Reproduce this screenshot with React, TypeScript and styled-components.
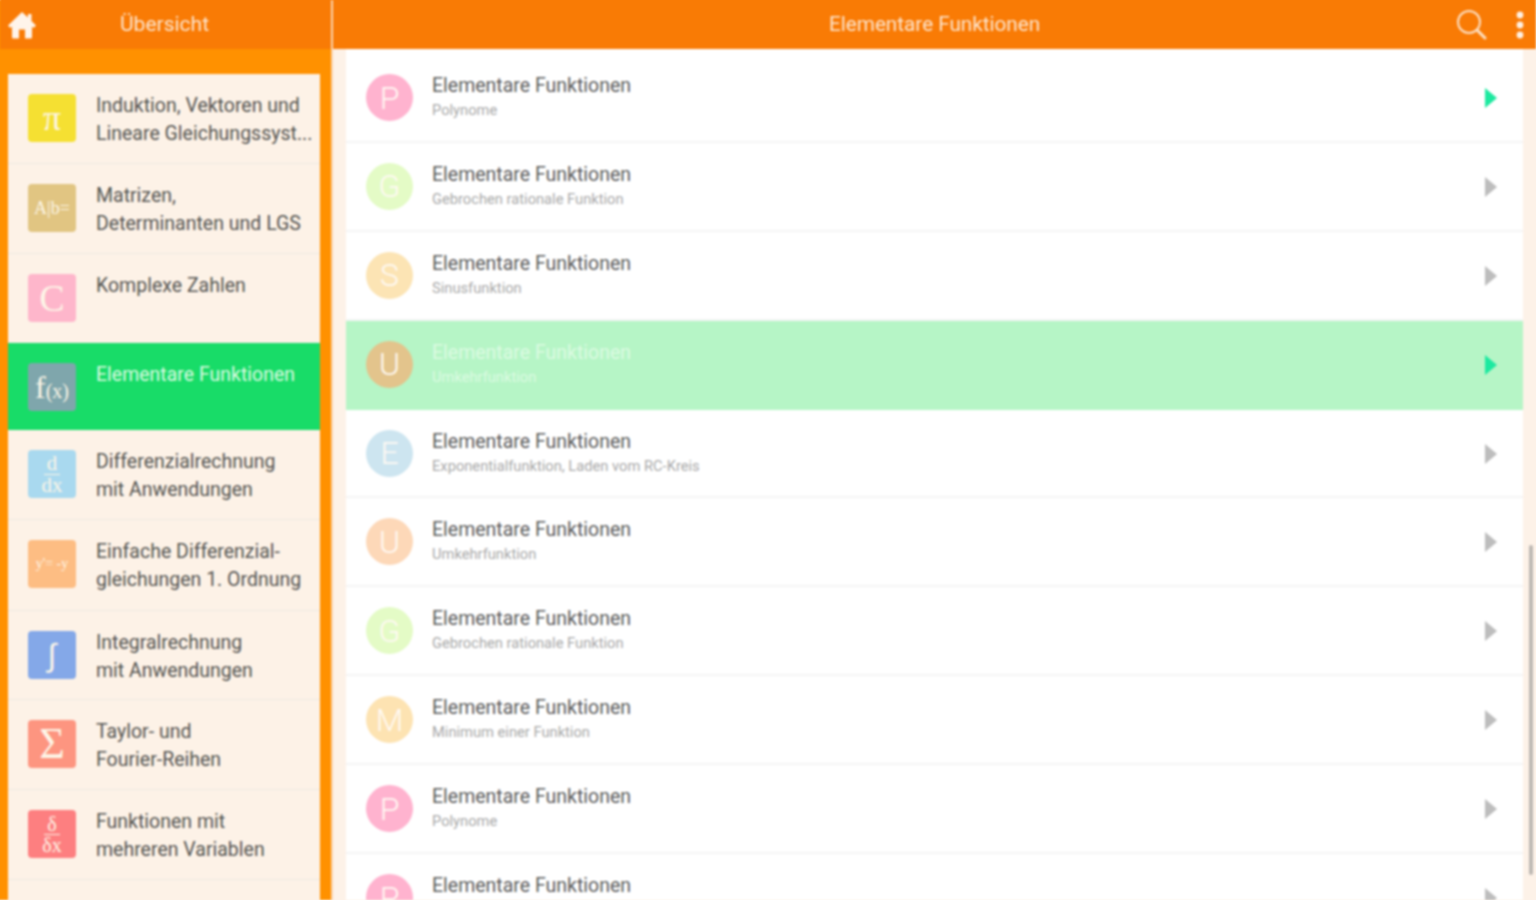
import styled, { createGlobalStyle } from "styled-components";

const GlobalStyle = createGlobalStyle`
  html, body {
    margin: 0;
    padding: 0;
    overflow: hidden;
    background: #fdf2e8;
  }
`;

const Page = styled.div`
  display: grid;
  grid-template-columns: 331px 2px 1fr;
  grid-template-rows: 49px 1fr;
  width: 1536px;
  height: 900px;
  overflow: hidden;
  position: relative;
  font-family: Roboto, "Noto Sans", sans-serif;
  filter: blur(0.8px);
  box-shadow: 0 -4px 0 #f97b05, -4px 0 0 #ff9100, 4px 0 0 #fdf2e8, 0 4px 0 #fdf2e8;
`;

const SideBar = styled.header`
  display: flex;
  align-items: center;
  background: #f97b05;
  color: #fde6d0;
`;

const HomeButton = styled.div`
  display: flex;
  width: 44px;
  padding-left: 8px;
  box-sizing: border-box;
`;

const SideTitle = styled.h2`
  margin: 0 0 2px 76px;
  font-size: 21px;
  font-weight: 400;
  line-height: 46px;
`;

const Divider = styled.div`
  grid-row: 1 / 3;
  grid-column: 2;
  background: #fbd3ac;
`;

const MainBar = styled.header`
  display: flex;
  align-items: center;
  background: #f97b05;
  color: #fde6d0;
  padding-left: 496px;
`;

const MainTitle = styled.h1`
  margin: 0 0 2px;
  width: 627px;
  font-size: 20.7px;
  font-weight: 400;
  line-height: 46px;
`;

const IconSlot = styled.div<{ $width: number }>`
  display: flex;
  width: ${(p) => p.$width}px;
`;

const Sidebar = styled.nav`
  background: #ff9100;
  padding: 25px 11px 0 8px;
  overflow: hidden;
`;

const TopicList = styled.div`
  background: #fdf2e7;
  height: 100%;
`;

const Topic = styled.div<{ $active?: boolean; $height: number }>`
  display: flex;
  box-sizing: border-box;
  height: ${(p) => p.$height}px;
  padding: 18px 0 0 20px;
  gap: 20px;
  background: ${(p) => (p.$active ? "#18dc68" : "transparent")};
  border-bottom: 1px solid ${(p) => (p.$active ? "#18dc68" : "#eee9e2")};
`;

const Tile = styled.div<{ $color: string }>`
  flex: none;
  display: flex;
  align-items: center;
  justify-content: center;
  width: 48px;
  height: 48px;
  margin-top: 2px;
  border-radius: 4px;
  background: ${(p) => p.$color};
  color: #fdf6e8;
  font-family: "Liberation Serif", serif;
  line-height: 1;
`;

const Glyph = styled.span<{ $size: number; $sans?: boolean }>`
  font-family: ${(p) => (p.$sans ? '"Liberation Sans", sans-serif' : "inherit")};
  font-size: ${(p) => p.$size}px;
  line-height: 1;
  white-space: nowrap;
`;

const Fraction = styled.span<{ $size: number }>`
  display: flex;
  flex-direction: column;
  align-items: center;
  font-size: ${(p) => p.$size}px;
  line-height: 1;

  span:first-child {
    border-bottom: 1px solid #fdf6e8;
    padding: 0 3px;
  }
`;

const TopicText = styled.div<{ $active?: boolean }>`
  width: 216px;
  font-size: 19.5px;
  line-height: 28px;
  color: ${(p) => (p.$active ? "#dcfbe2" : "#555552")};
`;

const TopicLine = styled.div`
  white-space: nowrap;
`;

const Content = styled.main`
  background: #fdf2e8;
  padding-left: 13px;
  padding-right: 13px;
  overflow: hidden;
`;

const EntryList = styled.div`
  background: #fff;
  padding-top: 5px;
`;

const Entry = styled.div<{ $selected?: boolean }>`
  display: flex;
  align-items: flex-start;
  box-sizing: border-box;
  height: 88.9px;
  padding: 20px 26px 0 20px;
  background: ${(p) => (p.$selected ? "#b6f5c6" : "#fff")};
  border-bottom: 2px solid ${(p) => (p.$selected ? "#b6f5c6" : "#f4f4f4")};
`;

const Badge = styled.div<{ $color: string }>`
  flex: none;
  display: flex;
  align-items: center;
  justify-content: center;
  width: 47px;
  height: 47px;
  border-radius: 50%;
  background: ${(p) => p.$color};
  color: #fffaf4;
  font-size: 32px;
  font-weight: 300;
`;

const EntryText = styled.div`
  flex: 1;
  margin: -1px 0 0 19px;
`;

const EntryTitle = styled.div<{ $selected?: boolean }>`
  font-size: 19.5px;
  line-height: 26px;
  color: ${(p) => (p.$selected ? "#dcfbe2" : "#5c5c5c")};
`;

const EntrySub = styled.div<{ $selected?: boolean }>`
  font-size: 14.7px;
  line-height: 22px;
  color: ${(p) => (p.$selected ? "#dcfbe2" : "#a8a8a8")};
`;

const Arrow = styled.div<{ $on?: boolean }>`
  flex: none;
  width: 0;
  height: 0;
  margin-top: 14px;
  border-style: solid;
  border-width: 10px 0 10px 12px;
  border-color: transparent transparent transparent
    ${(p) => (p.$on ? "#1de9a0" : "#bdbdbd")};
`;

const ScrollThumb = styled.div`
  position: absolute;
  left: 1529px;
  top: 545px;
  width: 4px;
  height: 330px;
  border-radius: 2px;
  background: #bdb8b3;
`;

const HomeIcon = () => (
  <svg width="28" height="28" viewBox="0 0 28 28" fill="#fff4ea">
    <path d="M14 1 L0 14.5 L2.4 17 L4 15.5 V26 C4 27 4.6 27.5 5.5 27.5 H11 V18.5 H17 V27.5 H22.5 C23.4 27.5 24 27 24 26 V15.5 L25.6 17 L28 14.5 L23.5 10 V3 H20 V6.6 Z" />
  </svg>
);

const SearchIcon = () => (
  <svg width="32" height="32" viewBox="0 0 32 32" fill="none" stroke="#fde0c4">
    <circle cx="13" cy="13" r="11" strokeWidth="2" />
    <path d="M21 21 L29 29" strokeWidth="3" strokeLinecap="round" />
  </svg>
);

const DotsIcon = () => (
  <svg width="10" height="30" viewBox="0 0 10 30" fill="#fff0e2">
    <circle cx="5" cy="5" r="3.4" />
    <circle cx="5" cy="15" r="3.4" />
    <circle cx="5" cy="25" r="3.4" />
  </svg>
);

const topics = [
  { height: 90, color: "#f5e032", glyph: <Glyph $size={36}>π</Glyph>, lines: ["Induktion, Vektoren und", "Lineare Gleichungssyst..."] },
  { height: 90, color: "#e1c582", glyph: <Glyph $size={18}>A|b=</Glyph>, lines: ["Matrizen,", "Determinanten und LGS"] },
  { height: 89, color: "#feb6cb", glyph: <Glyph $size={38}>C</Glyph>, lines: ["Komplexe Zahlen"] },
  {
    height: 87,
    color: "#7fa6ac",
    glyph: (
      <Glyph $size={20}>
        <Glyph $size={32}>f</Glyph>(x)
      </Glyph>
    ),
    lines: ["Elementare Funktionen"],
    active: true,
  },
  {
    height: 90,
    color: "#a9d9ef",
    glyph: (
      <Fraction $size={21}>
        <span>d</span>
        <span>dx</span>
      </Fraction>
    ),
    lines: ["Differenzialrechnung", "mit Anwendungen"],
  },
  { height: 91, color: "#fdbd83", glyph: <Glyph $size={14}>y'= -y</Glyph>, lines: ["Einfache Differenzial-", "gleichungen 1. Ordnung"] },
  { height: 89, color: "#84a8e8", glyph: <Glyph $size={32} $sans>∫</Glyph>, lines: ["Integralrechnung", "mit Anwendungen"] },
  { height: 90, color: "#fd9580", glyph: <Glyph $size={44}>Σ</Glyph>, lines: ["Taylor- und", "Fourier-Reihen"] },
  {
    height: 90,
    color: "#fd7f80",
    glyph: (
      <Fraction $size={20}>
        <span>δ</span>
        <span>δx</span>
      </Fraction>
    ),
    lines: ["Funktionen mit", "mehreren Variablen"],
  },
];

const entries = [
  { letter: "P", color: "#ffb3cf", sub: "Polynome", on: true },
  { letter: "G", color: "#e4fbc6", sub: "Gebrochen rationale Funktion" },
  { letter: "S", color: "#fce4b4", sub: "Sinusfunktion" },
  { letter: "U", color: "#e3c48c", sub: "Umkehrfunktion", selected: true, on: true },
  { letter: "E", color: "#cde5f0", sub: "Exponentialfunktion, Laden vom RC-Kreis" },
  { letter: "U", color: "#fdd8b8", sub: "Umkehrfunktion" },
  { letter: "G", color: "#e4fbc6", sub: "Gebrochen rationale Funktion" },
  { letter: "M", color: "#fde3b2", sub: "Minimum einer Funktion" },
  { letter: "P", color: "#ffb3cf", sub: "Polynome" },
  { letter: "P", color: "#ffb3cf", sub: "" },
];

const App = () => {
  return (
    <Page>
      <GlobalStyle />
      <SideBar>
        <HomeButton>
          <HomeIcon />
        </HomeButton>
        <SideTitle>Übersicht</SideTitle>
      </SideBar>
      <Divider />
      <MainBar>
        <MainTitle>Elementare Funktionen</MainTitle>
        <IconSlot $width={59}>
          <SearchIcon />
        </IconSlot>
        <IconSlot $width={10}>
          <DotsIcon />
        </IconSlot>
      </MainBar>
      <Sidebar>
        <TopicList>
          {topics.map((topic) => (
            <Topic key={topic.lines[0]} $active={topic.active} $height={topic.height}>
              <Tile $color={topic.color}>{topic.glyph}</Tile>
              <TopicText $active={topic.active}>
                {topic.lines.map((line) => (
                  <TopicLine key={line}>{line}</TopicLine>
                ))}
              </TopicText>
            </Topic>
          ))}
        </TopicList>
      </Sidebar>
      <Content>
        <EntryList>
          {entries.map((entry, i) => (
            <Entry key={i} $selected={entry.selected}>
              <Badge $color={entry.color}>{entry.letter}</Badge>
              <EntryText>
                <EntryTitle $selected={entry.selected}>Elementare Funktionen</EntryTitle>
                <EntrySub $selected={entry.selected}>{entry.sub}</EntrySub>
              </EntryText>
              <Arrow $on={entry.on} />
            </Entry>
          ))}
        </EntryList>
      </Content>
      <ScrollThumb />
    </Page>
  );
};

export default App;
